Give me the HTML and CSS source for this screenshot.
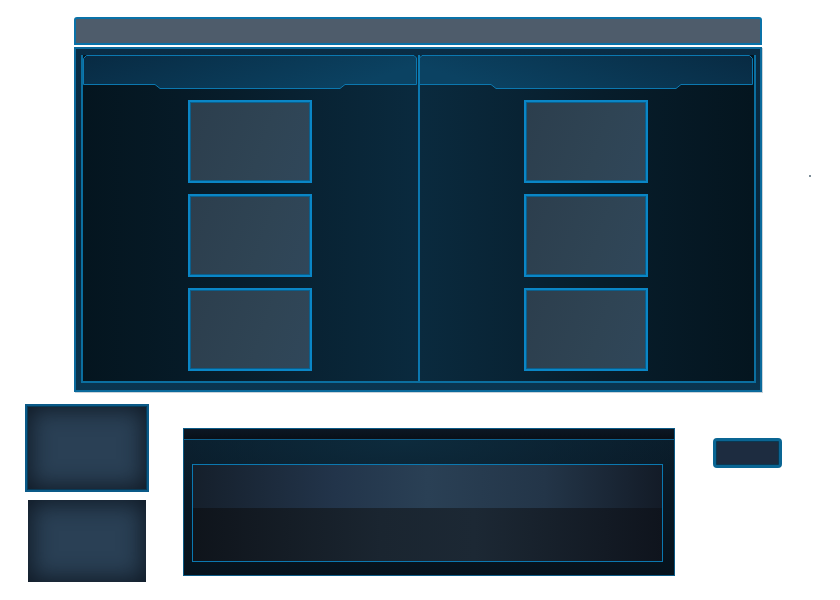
FILE: index.html
```html
<!DOCTYPE html>
<html lang="en">
<head>
    <meta charset="UTF-8">
    <meta name="viewport" content="width=device-width, initial-scale=1.0">
    <title>Panel Skin</title>
    <link rel="stylesheet" href="styles.css">
</head>
<body>
    <div class="window">
        <div class="titlebar"></div>
        <div class="panel">
            <div class="panel-body">
                <div class="column column-left">
                    <svg class="col-header" width="334" height="34" viewBox="0 0 334 34">
                        <defs>
                            <linearGradient id="hdrLeft" x1="0" y1="0" x2="1" y2="0.3">
                                <stop offset="0" stop-color="#082a42"/>
                                <stop offset="1" stop-color="#0b4262"/>
                            </linearGradient>
                        </defs>
                        <path d="M3.5 0.5 H331 L333.5 3 V29.5 H262 L257 33.5 H77 L72 29.5 H0.5 V3.5 Z" fill="url(#hdrLeft)" stroke="#0b78b0"/>
                    </svg>
                    <div class="slots">
                        <div class="slot"></div>
                        <div class="slot"></div>
                        <div class="slot"></div>
                    </div>
                </div>
                <div class="divider"></div>
                <div class="column column-right">
                    <svg class="col-header" width="334" height="34" viewBox="0 0 334 34">
                        <defs>
                            <linearGradient id="hdrRight" x1="0" y1="0.3" x2="1" y2="0">
                                <stop offset="0" stop-color="#0b4262"/>
                                <stop offset="1" stop-color="#082a42"/>
                            </linearGradient>
                        </defs>
                        <path d="M3 0.5 H330.5 L333.5 3.5 V29.5 H262 L257 33.5 H77 L72 29.5 H0.5 V3 Z" fill="url(#hdrRight)" stroke="#0b78b0"/>
                    </svg>
                    <div class="slots slots-right">
                        <div class="slot"></div>
                        <div class="slot"></div>
                        <div class="slot"></div>
                    </div>
                </div>
            </div>
        </div>
    </div>

    <!-- loose parts below the window -->
    <div class="parts">
        <div class="tiles">
            <div class="tile tile-framed"></div>
            <div class="tile tile-plain"></div>
        </div>
        <div class="dialog">
            <div class="dialog-top"></div>
            <div class="dialog-body">
                <div class="field">
                    <div class="field-upper"></div>
                    <div class="field-lower"></div>
                </div>
            </div>
        </div>
        <div class="button"></div>
    </div>

    <span class="speck"></span>
</body>
</html>
```

FILE: styles.css
```css
body {
    font-family: "Liberation Sans", Arial, sans-serif;
    margin: 0;
    padding: 0;
    background-color: white;
    position: relative;
    width: 840px;
    height: 600px;
}

.window {
    width: 688px;
    margin-left: 74px;
    padding-top: 17px;
}

.titlebar {
    height: 28px;
    box-sizing: border-box;
    background-color: #4e5c6b;
    border: 2px solid #0a72a8;
    border-radius: 3px 3px 0 0;
    margin-bottom: 2px;
}

.panel {
    height: 345px;
    box-sizing: border-box;
    border: 2px solid #0b6a9c;
    padding: 6px 4px 7px 5px;
    background: linear-gradient(180deg, #0a2c44 0%, #072438 60%, #0a3550 100%);
    box-shadow: 1px 1px 0 #c9d3da;
}

.panel-body {
    height: 100%;
    box-sizing: border-box;
    display: grid;
    grid-template-columns: 1fr 2px 1fr;
    border: 2px solid #0b6fa0;
    border-top: none;
}

.column {
    display: flex;
    flex-direction: column;
    align-items: center;
}

.column-left {
    background: linear-gradient(90deg, #04151f 0%, #071d2b 45%, #0a2a3e 100%);
}

.column-right {
    background: linear-gradient(90deg, #0a2a3e 0%, #071d2b 55%, #04151f 100%);
}

.divider {
    background-color: #0b78b0;
}

.col-header {
    display: block;
    flex-shrink: 0;
    margin-left: -1px;
}

.slots {
    display: flex;
    flex-direction: column;
    gap: 11px;
    margin-top: 11px;
}

.slots-right {
    margin-left: -2px;
}

.slot {
    width: 124px;
    height: 83px;
    box-sizing: border-box;
    border: 2px solid #0a86c6;
    background: linear-gradient(110deg, #2c3e4d 0%, #2f4454 60%, #30475a 100%);
    box-shadow: inset 0 0 0 1px #0b5f8c;
}

/* bottom row */
.parts {
    display: flex;
    align-items: flex-start;
    margin-top: 12px;
    padding-left: 25px;
}

.tiles {
    width: 124px;
    display: flex;
    flex-direction: column;
    align-items: center;
}

.tile {
    box-sizing: border-box;
    background-color: #2a4055;
    box-shadow: inset 0 0 22px 4px rgba(12, 20, 30, 0.85);
}

.tile-framed {
    width: 124px;
    height: 88px;
    border: 2px solid #0a5a88;
    box-shadow: inset 0 0 0 1px #083a57, inset 0 0 22px 4px rgba(12, 20, 30, 0.85);
}

.tile-plain {
    width: 118px;
    height: 82px;
    margin-top: 8px;
}

.dialog {
    width: 492px;
    height: 148px;
    box-sizing: border-box;
    margin-left: 34px;
    margin-top: 24px;
    border: 1px solid #0b5a85;
    background-color: #06121c;
    display: flex;
    flex-direction: column;
}

.dialog-top {
    height: 10px;
    background: linear-gradient(180deg, #0c1724, #081019);
    border-bottom: 1px solid #0d5f8c;
}

.dialog-body {
    flex: 1;
    padding: 24px 11px 13px 8px;
    background:
        radial-gradient(ellipse 60% 60% at 45% 0%, #0d2b3d 0%, rgba(13, 43, 61, 0) 100%),
        linear-gradient(180deg, #0a1c2a 0%, #06121c 100%);
}

.field {
    height: 98px;
    box-sizing: border-box;
    border: 1px solid #0b78b0;
    display: flex;
    flex-direction: column;
}

.field-upper {
    height: 43px;
    background: linear-gradient(90deg, #151f2b 0%, #22344a 30%, #2a4055 50%, #233548 75%, #131b27 100%);
}

.field-lower {
    flex: 1;
    background: linear-gradient(90deg, #0f141b 0%, #1a2530 40%, #1c2834 60%, #0f141d 100%);
}

.button {
    width: 69px;
    height: 30px;
    box-sizing: border-box;
    margin-left: 38px;
    margin-top: 34px;
    border: 3px solid #0a6593;
    border-radius: 4px;
    background-color: #1d2c40;
    box-shadow: inset 0 0 0 1px #0a3852;
}

.speck {
    position: absolute;
    left: 809px;
    top: 175px;
    width: 2px;
    height: 2px;
    background-color: #7d8d98;
}
```
